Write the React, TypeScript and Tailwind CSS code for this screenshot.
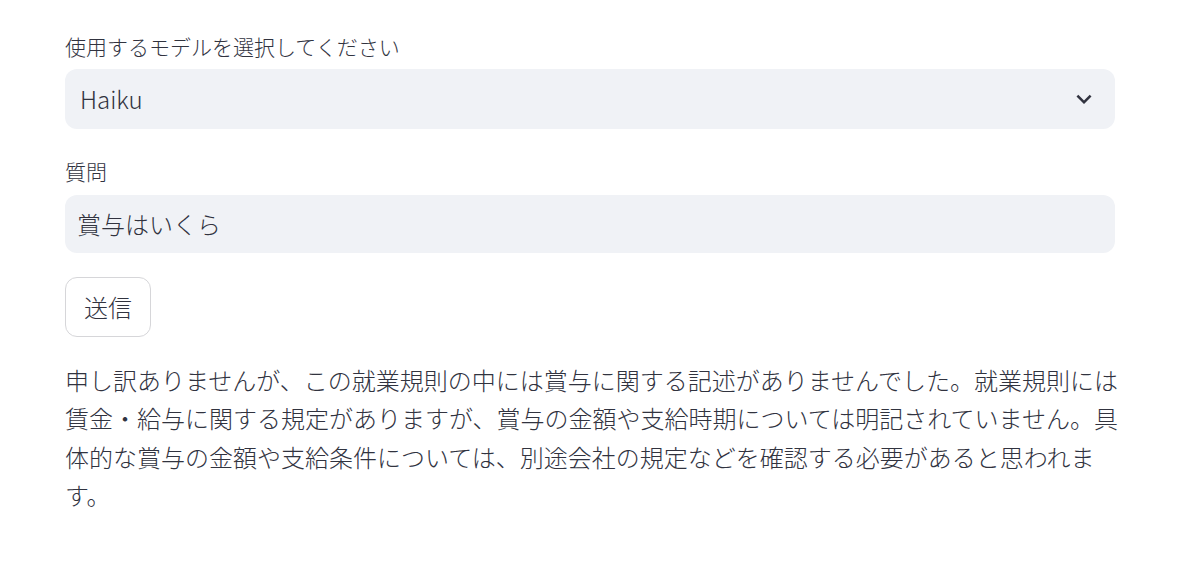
const fontStack = 'font-["Noto_Sans_CJK_JP","Noto_Sans",sans-serif]'

function ChevronDown() {
  return (
    <svg width="30" height="30" viewBox="0 0 24 24" fill="#31333f" aria-hidden="true">
      <path d="M16.59 8.59L12 13.17 7.41 8.59 6 10l6 6 6-6z" />
    </svg>
  )
}

export default function App() {
  return (
    <main className={`${fontStack} min-h-[566px] w-full bg-white font-light text-[#31333f]`}>
      <div className="ml-[65px] flex w-[1050px] flex-col gap-[24px] pt-[28px]">
        <div className="flex flex-col">
          <label className="flex h-[36px] items-center text-[21px] leading-none">
            使用するモデルを選択してください
          </label>
          <div className="mt-[5px] flex h-[60px] items-center justify-between rounded-[12px] bg-[#f0f2f6] pl-[15px] pr-[16px]">
            <span className="text-[24px] leading-none">Haiku</span>
            <ChevronDown />
          </div>
        </div>

        <div className="flex flex-col">
          <label className="flex h-[36px] items-center text-[21px] leading-none">質問</label>
          <div className="mt-[6px] flex h-[58px] items-center rounded-[12px] bg-[#f0f2f6] pl-[12px]">
            <span className="text-[24px] leading-none">賞与はいくら</span>
          </div>
        </div>

        <div>
          <button
            type="button"
            className="flex h-[60px] items-center rounded-[12px] border border-[#d6d6d9] bg-white px-[18px] text-[24px] leading-none text-[#31333f]"
          >
            送信
          </button>
        </div>

        <p className="w-[1055px] text-[24px] leading-[38.4px]">
          申し訳ありませんが、この就業規則の中には賞与に関する記述がありませんでした。就業規則には賃金・給与に関する規定がありますが、賞与の金額や支給時期については明記されていません。具体的な賞与の金額や支給条件については、別途会社の規定などを確認する必要があると思われます。
        </p>
      </div>
    </main>
  )
}
